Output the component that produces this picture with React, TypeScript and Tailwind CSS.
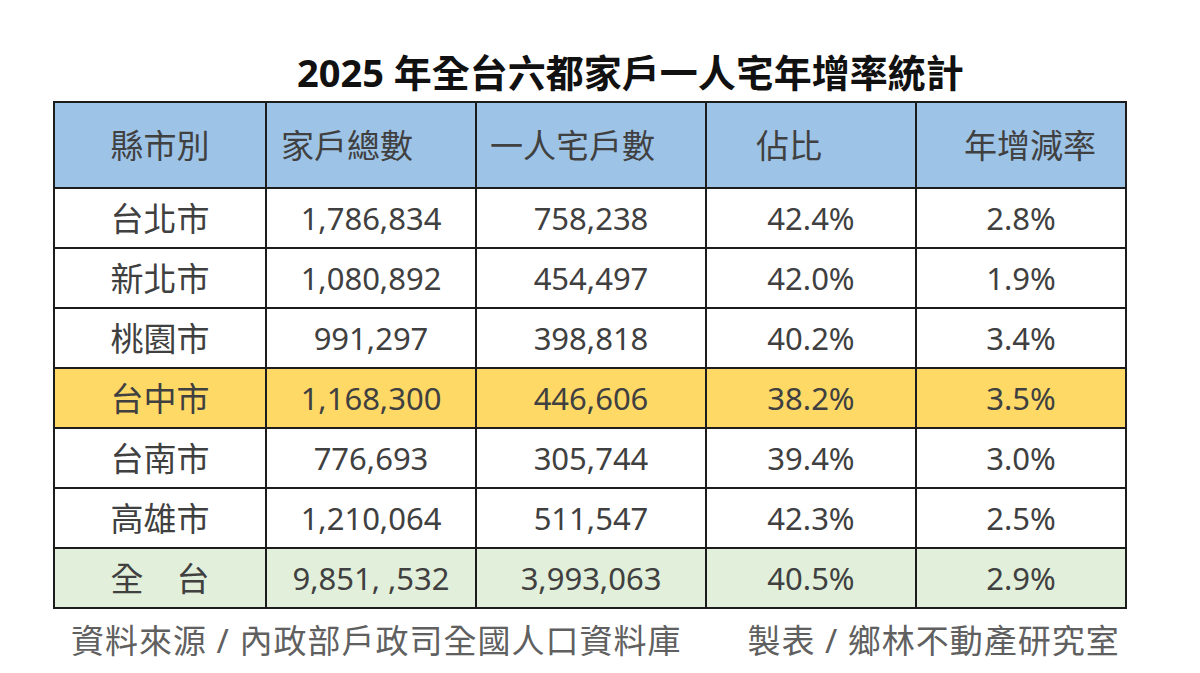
import React from "react";

const rows = [
  { city: "台北市", total: "1,786,834", single: "758,238", ratio: "42.4%", growth: "2.8%", bg: "bg-white" },
  { city: "新北市", total: "1,080,892", single: "454,497", ratio: "42.0%", growth: "1.9%", bg: "bg-white" },
  { city: "桃園市", total: "991,297", single: "398,818", ratio: "40.2%", growth: "3.4%", bg: "bg-white" },
  { city: "台中市", total: "1,168,300", single: "446,606", ratio: "38.2%", growth: "3.5%", bg: "bg-[#ffd966]" },
  { city: "台南市", total: "776,693", single: "305,744", ratio: "39.4%", growth: "3.0%", bg: "bg-white" },
  { city: "高雄市", total: "1,210,064", single: "511,547", ratio: "42.3%", growth: "2.5%", bg: "bg-white" },
  { city: "全\u3000台", total: "9,851, ,532", single: "3,993,063", ratio: "40.5%", growth: "2.9%", bg: "bg-[#e2efda]" },
];

const cell = "border-2 border-[#1c1c1c] h-[60px] p-0 text-center align-middle font-normal";

const App = () => {
  return (
    <div
      className="w-[1200px] h-[673px] bg-white text-[#404040] overflow-hidden"
      style={{ fontFamily: '"Noto Sans", "Noto Sans CJK TC", sans-serif' }}
    >
      <h1 className="pt-[49px] pl-[297px] h-[101px] text-[38px] leading-[46px] font-bold text-[#111]">
        2025 年全台六都家戶一人宅年增率統計
      </h1>

      <table className="ml-[53px] w-[1072px] border-collapse table-fixed text-[31px] leading-none">
        <colgroup>
          <col className="w-[212px]" />
          <col className="w-[210px]" />
          <col className="w-[230px]" />
          <col className="w-[210px]" />
          <col className="w-[210px]" />
        </colgroup>
        <thead>
          <tr className="bg-[#9dc3e6] h-[86px] text-[33px]">
            <th className={`${cell} h-[86px]`}>縣市別</th>
            <th className={`${cell} h-[86px] text-left pl-[14px]`}>家戶總數</th>
            <th className={`${cell} h-[86px] text-left pl-[13px]`}>一人宅戶數</th>
            <th className={`${cell} h-[86px] text-left pl-[49px]`}>佔比</th>
            <th className={`${cell} h-[86px] text-left pl-[47px]`}>年增減率</th>
          </tr>
        </thead>
        <tbody>
          {rows.map((r) => (
            <tr key={r.city} className={r.bg}>
              <td className={`${cell} text-[33px]`}>{r.city}</td>
              <td className={cell}>{r.total}</td>
              <td className={cell}>{r.single}</td>
              <td className={cell}>{r.ratio}</td>
              <td className={cell}>{r.growth}</td>
            </tr>
          ))}
        </tbody>
      </table>

      <div className="flex mt-[12px] text-[33px] leading-[40px] tracking-[1px] text-[#606060]">
        <span className="ml-[71px]">資料來源 / 內政部戶政司全國人口資料庫</span>
        <span className="ml-[66px]">製表 / 鄉林不動產研究室</span>
      </div>
    </div>
  );
};

export default App;
